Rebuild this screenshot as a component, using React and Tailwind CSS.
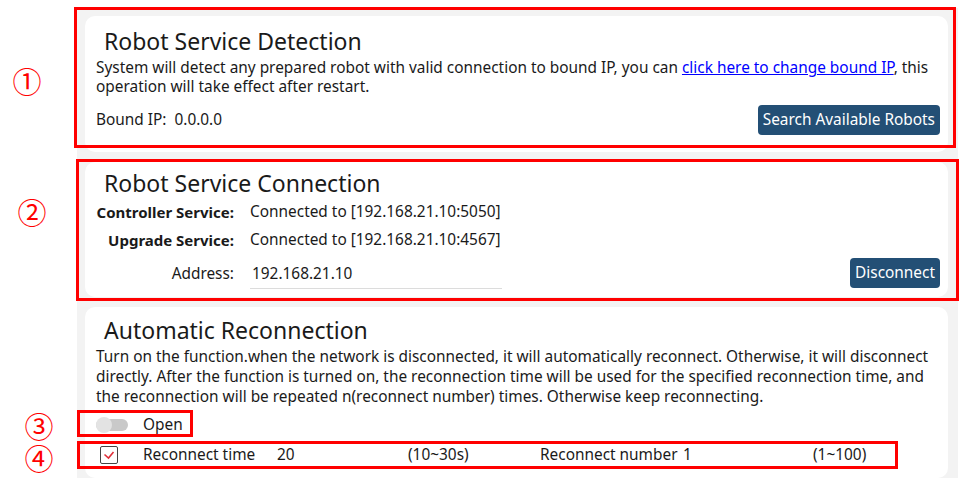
import React from 'react';

const font = { fontFamily: '"Noto Sans", "Open Sans", sans-serif' };

function Mark({ className, children }) {
  return (
    <div className={`absolute w-[32px] h-[28px] flex items-center justify-center text-[#ff0000] text-[29px] leading-none ${className}`} style={{ fontFamily: '"Noto Sans CJK JP", "DejaVu Sans", sans-serif' }}>
      {children}
    </div>
  );
}

export default function App() {
  return (
    <div className="relative w-[972px] h-[478px] bg-white overflow-hidden text-[#1a1a1a]" style={font}>
      <div className="ml-[77px] mt-[8px] w-[881px] bg-[#f3f3f3] pt-[8px] pl-[8px] pr-[10px] flex flex-col gap-[10px] pb-[4px]">
        {/* detection */}
        <div className="bg-white rounded-[10px] h-[136px] pl-[11px] pr-[8px] pt-[10px]">
          <h2 className="ml-[8px] text-[23px] leading-[30px]">Robot Service Detection</h2>
          <p className="text-[15.4px] leading-[19px] mt-[2px] pr-[10px]">
            System will detect any prepared robot with valid connection to bound IP, you can <a href="#" className="text-[#0000ff] underline">click here to change bound IP</a>, this operation will take effect after restart.
          </p>
          <div className="flex items-center justify-between mt-[9px]">
            <span className="text-[15.4px]">Bound IP:&nbsp; 0.0.0.0</span>
            <button className="bg-[#234f75] text-white text-[15.4px] h-[30px] px-[5px] rounded-[4px]">Search Available Robots</button>
          </div>
        </div>

        {/* connection */}
        <div className="bg-white rounded-[10px] h-[135px] pl-[11px] pr-[8px] pt-[6px]">
          <h2 className="ml-[8px] text-[23px] leading-[30px]">Robot Service Connection</h2>
          <div className="text-[15.4px] flex flex-col">
            <div className="flex items-center h-[28px]">
              <span className="w-[138px] shrink-0 whitespace-nowrap text-right font-bold text-[15px]">Controller Service:</span>
              <span className="ml-[16px]">Connected to [192.168.21.10:5050]</span>
            </div>
            <div className="flex items-center h-[28px]">
              <span className="w-[138px] shrink-0 whitespace-nowrap text-right font-bold text-[15px]">Upgrade Service:</span>
              <span className="ml-[16px]">Connected to [192.168.21.10:4567]</span>
            </div>
            <div className="flex items-end justify-between h-[35px]">
              <div className="flex items-center">
                <span className="w-[138px] shrink-0 text-right">Address:</span>
                <span className="ml-[16px] w-[252px] border-b border-[#dcdcdc] pl-[2px] pb-[3px] pt-[4px]">192.168.21.10</span>
              </div>
              <button className="bg-[#234f75] text-white text-[15.4px] h-[30px] px-[5px] rounded-[4px] mb-[1px]">Disconnect</button>
            </div>
          </div>
        </div>

        {/* reconnection */}
        <div className="bg-white rounded-[10px] h-[171px] pl-[11px] pr-[8px] pt-[8px]">
          <h2 className="ml-[8px] text-[23px] leading-[30px]">Automatic Reconnection</h2>
          <p className="text-[15.4px] leading-[20px] mt-[2px] pr-[10px]">
            Turn on the function.when the network is disconnected, it will automatically reconnect. Otherwise, it will disconnect directly. After the function is turned on, the reconnection time will be used for the specified reconnection time, and the reconnection will be repeated n(reconnect number) times. Otherwise keep reconnecting.
          </p>
          <div className="flex items-center h-[28px] mt-[4px]">
            <div className="relative w-[32px] h-[16px] flex items-center">
              <div className="w-[32px] h-[12px] rounded-full bg-[#c9c9c9]"></div>
              <div className="absolute left-0 top-0 w-[16px] h-[16px] rounded-full bg-[#e3e3e3]"></div>
            </div>
            <span className="ml-[15px] text-[15.4px]">Open</span>
          </div>
          <div className="flex items-center h-[32px] text-[15.4px]">
            <div className="w-[47px] pl-[4px]">
              <div className="w-[18px] h-[18px] border-[1.5px] border-[#444] rounded-[2px] flex items-center justify-center">
                <svg width="12" height="10" viewBox="0 0 12 10">
                  <path d="M1.5 4.5 L5.5 8 L10.5 2" stroke="#e0303a" strokeWidth="1.6" fill="none" />
                </svg>
              </div>
            </div>
            <span className="w-[134px]">Reconnect time</span>
            <span className="w-[131px]">20</span>
            <span className="w-[132px]">(10~30s)</span>
            <span className="w-[143px]">Reconnect number</span>
            <span className="w-[130px]">1</span>
            <span>(1~100)</span>
          </div>
        </div>
      </div>

      {/* annotations */}
      <div className="absolute left-[74px] top-[7px] w-[882px] h-[141px] border-[3px] border-[#ff0000]"></div>
      <div className="absolute left-[76px] top-[159px] w-[883px] h-[142px] border-[3px] border-[#ff0000]"></div>
      <div className="absolute left-[77px] top-[410px] w-[116px] h-[27px] border-[3px] border-[#ff0000]"></div>
      <div className="absolute left-[77px] top-[441px] w-[821px] h-[28px] border-[3px] border-[#ff0000]"></div>
      <Mark className="left-[11px] top-[66px]">①</Mark>
      <Mark className="left-[16px] top-[197px]">②</Mark>
      <Mark className="left-[23px] top-[411px]">③</Mark>
      <Mark className="left-[23px] top-[443px]">④</Mark>
    </div>
  );
}
